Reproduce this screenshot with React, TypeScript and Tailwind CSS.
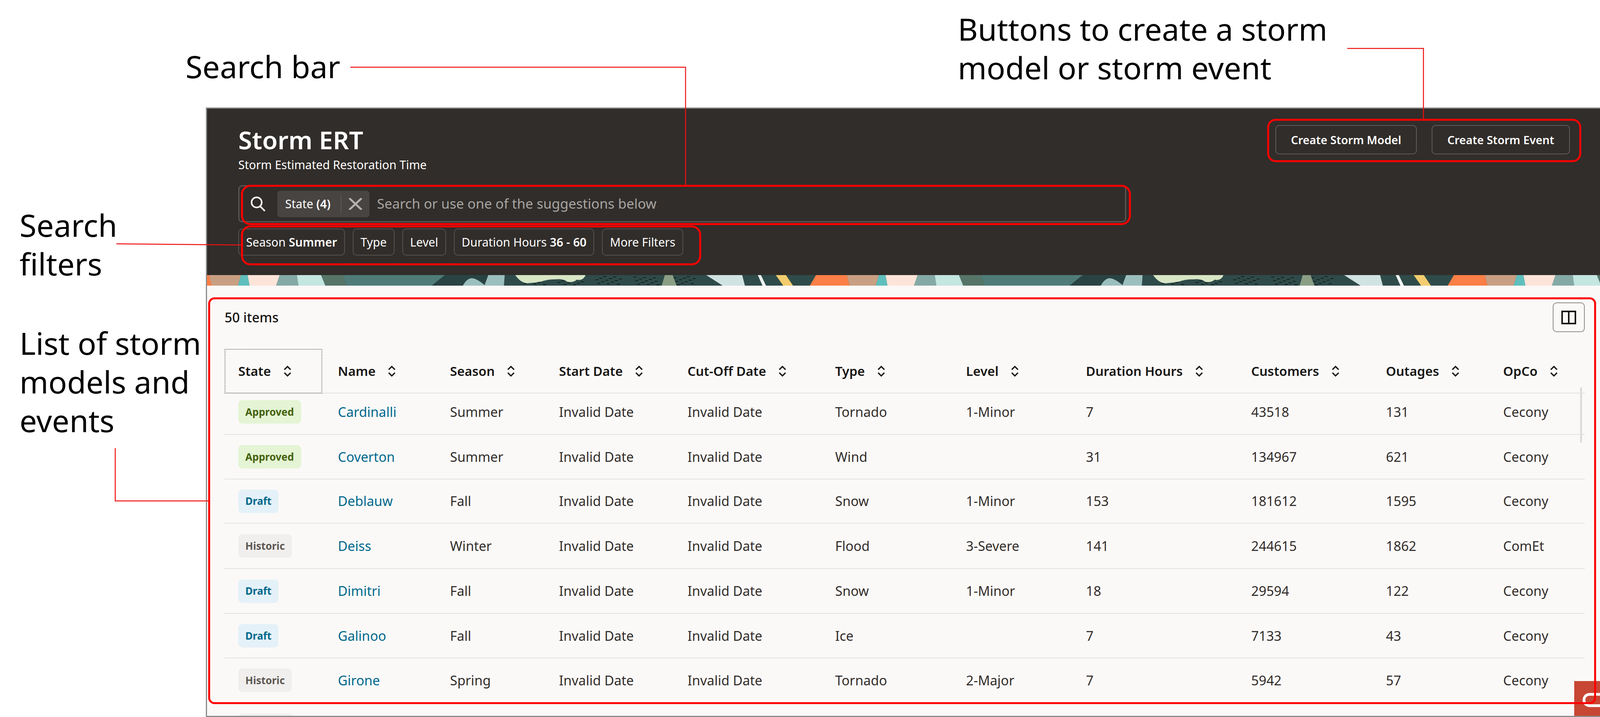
const gridCols = "grid grid-cols-[250px_287px_279px_329px_378px_335px_307px_423px_345px_300px_249px]"

const columns = ["State", "Name", "Season", "Start Date", "Cut-Off Date", "Type", "Level", "Duration Hours", "Customers", "Outages", "OpCo"]

interface Row {
    state: string,
    name: string,
    season: string,
    start: string,
    cutoff: string,
    type: string,
    level: string,
    hours: string,
    customers: string,
    outages: string,
    opco: string,
    height: string
}

const invalid = "Invalid Date"

const rows: Row[] = [
    { state: "Approved", name: "Cardinalli", season: "Summer", start: invalid, cutoff: invalid, type: "Tornado", level: "1-Minor", hours: "7", customers: "43518", outages: "131", opco: "Cecony", height: "h-[106px] pb-[10px]" },
    { state: "Approved", name: "Coverton", season: "Summer", start: invalid, cutoff: invalid, type: "Wind", level: "", hours: "31", customers: "134967", outages: "621", opco: "Cecony", height: "h-[114px]" },
    { state: "Draft", name: "Deblauw", season: "Fall", start: invalid, cutoff: invalid, type: "Snow", level: "1-Minor", hours: "153", customers: "181612", outages: "1595", opco: "Cecony", height: "h-[113px]" },
    { state: "Historic", name: "Deiss", season: "Winter", start: invalid, cutoff: invalid, type: "Flood", level: "3-Severe", hours: "141", customers: "244615", outages: "1862", opco: "ComEt", height: "h-[116px]" },
    { state: "Draft", name: "Dimitri", season: "Fall", start: invalid, cutoff: invalid, type: "Snow", level: "1-Minor", hours: "18", customers: "29594", outages: "122", opco: "Cecony", height: "h-[115px]" },
    { state: "Draft", name: "Galinoo", season: "Fall", start: invalid, cutoff: invalid, type: "Ice", level: "", hours: "7", customers: "7133", outages: "43", opco: "Cecony", height: "h-[114px]" },
    { state: "Historic", name: "Girone", season: "Spring", start: invalid, cutoff: invalid, type: "Tornado", level: "2-Major", hours: "7", customers: "5942", outages: "57", opco: "Cecony", height: "h-[114px]" }
]

const badgeStyles: Record<string, string> = {
    Approved: "bg-[#e4f4d4] text-[#45620f]",
    Draft: "bg-[#e4f1f8] text-[#00688c]",
    Historic: "bg-[#f1efed] text-[#5b5652]"
}

// dark speckles on the banner, u = x inside one 1633px tile
const specks: { x: number, y: number }[] = []
for (let i = 0; i < 64; i++) {
    specks.push({ x: 890 + ((i * 97) % 480), y: 3 + ((i * 37) % 22) })
}

const BannerTile = ({ x }: { x: number }) => (
    <g transform={`translate(${x} 0)`}>
        <rect x="0" y="0" width="1633" height="27" fill="#2f4b49" />
        <polygon points="16,0 95,0 102,27 0,27" fill="#fb7f47" />
        <polygon points="95,0 177,0 169,27 102,27" fill="#c99f83" />
        <polygon points="177,0 194,0 199,27 169,27" fill="#5fbfbc" />
        <polygon points="194,0 276,0 267,27 199,27" fill="#fde4d9" />
        <polygon points="276,0 320,0 324,27 267,27" fill="#85aaa6" />
        <polygon points="320,0 382,0 393,27 324,27" fill="#c4e6e1" />
        <polygon points="382,0 439,0 447,27 393,27" fill="#567568" />
        <polygon points="439,0 699,0 665,27 447,27" fill="#4f7c79" />
        <polygon points="699,0 810,0 800,27 665,27" fill="#284342" />
        <path d="M745 27 C752 14 760 8 768 8 C778 8 792 18 802 27 Z" fill="#9bbfbd" />
        <polygon points="810,0 852,0 850,27 800,27" fill="#9bbfbd" />
        {specks.map((s, i) => (
            <rect key={i} x={s.x} y={s.y} width="8" height="2" fill="#101f1d" />
        ))}
        <path d="M879 0 L1059 0 C1055 10 1048 14 1036 12 C1030 18 1020 19 1012 17 C1004 10 990 10 980 11 C968 11 960 12 948 16 C938 18 925 20 910 21 C896 20 886 10 879 0 Z" fill="#d8e6c6" />
        <polygon points="1262,0 1282,0 1292,27 1254,27" fill="#8a9e85" />
        <polygon points="1368,0 1460,0 1467,27 1410,27" fill="#d0e3e3" />
        <polygon points="1500,0 1508,0 1521,27 1512,27" fill="#eef4f3" />
        <polygon points="1546,0 1572,0 1590,27 1565,27" fill="#f2cc6e" />
    </g>
)

const SortIcon = () => (
    <svg width="20" height="28" viewBox="0 0 20 28" fill="none" stroke="#161513" strokeWidth="3.2" className="shrink-0">
        <path d="M2 10 L10 2 L18 10" />
        <path d="M2 18 L10 26 L18 18" />
    </svg>
)

const Chip = ({ label, value }: { label: string, value?: string }) => (
    <div className="h-[69px] px-[18px] flex items-center gap-[8px] border-2 border-[#55514e] rounded-[10px] text-[30px] text-white whitespace-nowrap">
        <span>{label}</span>
        {value && <span className="font-semibold">{value}</span>}
    </div>
)

const Callout = ({ className }: { className: string }) => (
    <div className={`absolute border-[#ff0000] ${className}`} />
)

const Note = ({ className, lines }: { className: string, lines: string[] }) => (
    <div className={`absolute text-[79px] leading-[99px] text-black whitespace-nowrap ${className}`}>
        {lines.map(line => <div key={line}>{line}</div>)}
    </div>
)

const App = () => {
    return (
        <div className="relative w-[4113px] h-[1835px] overflow-hidden bg-white pl-[527px] pt-[275px] font-['Noto_Sans',sans-serif]">

            <div className="relative w-[3586px] h-[1560px] overflow-hidden border-t-[3px] border-l-[3px] border-b-[3px] border-r-[4px] border-[#8c8c8c] bg-[#fbf9f8] flex flex-col">

                <div className="h-[426px] shrink-0 bg-[#312d2a] pl-[80px] pr-[90px] pt-[50px] flex justify-between">
                    <div>
                        <h1 className="text-[64px] leading-[60px] font-semibold text-white">Storm ERT</h1>
                        <p className="mt-[16px] text-[30px] leading-[36px] text-white">Storm Estimated Restoration Time</p>

                        <div className="mt-[34px] w-[2273px] h-[95px] border-[3px] border-[#5a5653] rounded-[10px] pl-[28px] flex items-center">
                            <svg width="40" height="38" viewBox="0 0 40 38" fill="none" stroke="white" strokeWidth="4" className="shrink-0">
                                <circle cx="16" cy="15" r="13" />
                                <path d="M25 25 L37 37" />
                            </svg>
                            <div className="ml-[29px] w-[236px] h-[68px] bg-[#474441] rounded-[8px] flex items-center pl-[20px] shrink-0">
                                <span className="text-[30px] text-white whitespace-nowrap">State <span className="font-semibold">(4)</span></span>
                                <div className="ml-auto w-[2px] h-[46px] bg-[#5f5b58]" />
                                <svg width="34" height="30" viewBox="0 0 34 30" fill="none" stroke="#b5b2af" strokeWidth="5" className="mx-[19px] shrink-0">
                                    <path d="M1 0 L33 30" />
                                    <path d="M33 0 L1 30" />
                                </svg>
                            </div>
                            <span className="ml-[19px] text-[35px] text-[#a8a5a2] whitespace-nowrap">Search or use one of the suggestions below</span>
                        </div>

                        <div className="mt-[16px] flex gap-[20px]">
                            <Chip label="Season" value="Summer" />
                            <Chip label="Type" />
                            <Chip label="Level" />
                            <Chip label="Duration Hours" value="36 - 60" />
                            <Chip label="More Filters" />
                        </div>
                    </div>

                    <div className="flex gap-[38px] items-start -mt-[8px]">
                        <button className="h-[75px] w-[362px] border-2 border-[#5f5b58] rounded-[10px] text-[29px] font-semibold text-white whitespace-nowrap">Create Storm Model</button>
                        <button className="h-[75px] w-[354px] border-2 border-[#5f5b58] rounded-[10px] text-[29px] font-semibold text-white whitespace-nowrap">Create Storm Event</button>
                    </div>
                </div>

                <svg width="3579" height="27" viewBox="0 0 3579 27" className="block shrink-0">
                    <BannerTile x={-90} />
                    <BannerTile x={1543} />
                    <BannerTile x={3176} />
                </svg>

                <div className="pl-[45px] w-[3527px]">
                    <div className="pt-[43px] flex items-center justify-between">
                        <span className="text-[34px] font-medium text-[#161513]">50 items</span>
                        <button className="w-[82px] h-[76px] border-2 border-[#8c8c8c] rounded-[10px] flex items-center justify-center">
                            <svg width="38" height="35" viewBox="0 0 38 35" fill="none" stroke="#161513" strokeWidth="4">
                                <rect x="2" y="2" width="34" height="31" />
                                <path d="M19 2 V33" />
                            </svg>
                        </button>
                    </div>

                    <div className={`${gridCols} mt-[43px] h-[114px] border-b-2 border-[#e4e2e0]`}>
                        {columns.map((col, i) => (
                            <div
                                key={col}
                                className={`flex items-center gap-[32px] text-[33px] font-semibold text-[#161513] whitespace-nowrap ${i === 0 ? "pl-[33px] h-[114px] border-2 border-dotted border-[#6f6b68]" : "pl-[40px]"}`}
                            >
                                <span>{col}</span>
                                <SortIcon />
                            </div>
                        ))}
                    </div>

                    {rows.map((row) => (
                        <div key={row.name} className={`${gridCols} ${row.height} items-center border-b-2 border-[#e4e2e0] text-[34px] text-[#312d2a] whitespace-nowrap`}>
                            <div className="pl-[35px]">
                                <span className={`inline-flex items-center h-[60px] px-[18px] rounded-[10px] text-[26px] font-bold ${badgeStyles[row.state]}`}>{row.state}</span>
                            </div>
                            <div className="pl-[40px] text-[#00688c]">{row.name}</div>
                            <div className="pl-[40px]">{row.season}</div>
                            <div className="pl-[40px]">{row.start}</div>
                            <div className="pl-[40px]">{row.cutoff}</div>
                            <div className="pl-[40px]">{row.type}</div>
                            <div className="pl-[40px]">{row.level}</div>
                            <div className="pl-[40px]">{row.hours}</div>
                            <div className="pl-[40px]">{row.customers}</div>
                            <div className="pl-[40px]">{row.outages}</div>
                            <div className="pl-[40px]">{row.opco}</div>
                        </div>
                    ))}

                    {/* top of the next badge, the rest of the row is below the fold */}
                    <div className="pt-[27px] pl-[35px]">
                        <div className="w-[140px] h-[60px] rounded-[10px] bg-[#f1efed]" />
                    </div>
                </div>

                <div className="absolute right-0 bottom-0 w-[79px] h-[89px] bg-[#c74634] overflow-hidden">
                    <svg width="79" height="89" viewBox="0 0 79 89" fill="none" stroke="white" strokeWidth="7">
                        <rect x="25" y="34" width="60" height="29" rx="14" />
                    </svg>
                </div>
            </div>

            <div className="absolute left-[4045px] top-[991px] w-[5px] h-[142px] rounded-full bg-[#dedcda]" />

            <Note className="left-[475px] top-[120px]" lines={["Search bar"]} />
            <Note className="left-[50px] top-[526px]" lines={["Search", "filters"]} />
            <Note className="left-[50px] top-[828px]" lines={["List of storm", "models and", "events"]} />
            <Note className="left-[2452px] top-[24px]" lines={["Buttons to create a storm", "model or storm event"]} />

            <Callout className="left-[617px] top-[473px] w-[2278px] h-[103px] border-[5px] rounded-[24px]" />
            <Callout className="left-[617px] top-[577px] w-[1178px] h-[102px] border-[5px] rounded-[24px]" />
            <Callout className="left-[3244px] top-[304px] w-[804px] h-[111px] border-[5px] rounded-[22px]" />
            <Callout className="left-[533px] top-[761px] w-[3553px] h-[1041px] border-[5px] rounded-[16px]" />

            {/* leader lines from the notes to their boxes */}
            <svg width="4113" height="1835" viewBox="0 0 4113 1835" fill="none" stroke="#ee1111" strokeWidth="2.5" className="absolute left-0 top-0 pointer-events-none">
                <path d="M897 172 H1755 V473" />
                <path d="M3449 124 H3644 V304" />
                <path d="M298 624 L618 627" />
                <path d="M295 1147 V1282 H533" />
            </svg>
        </div>
    )
}

export default App
